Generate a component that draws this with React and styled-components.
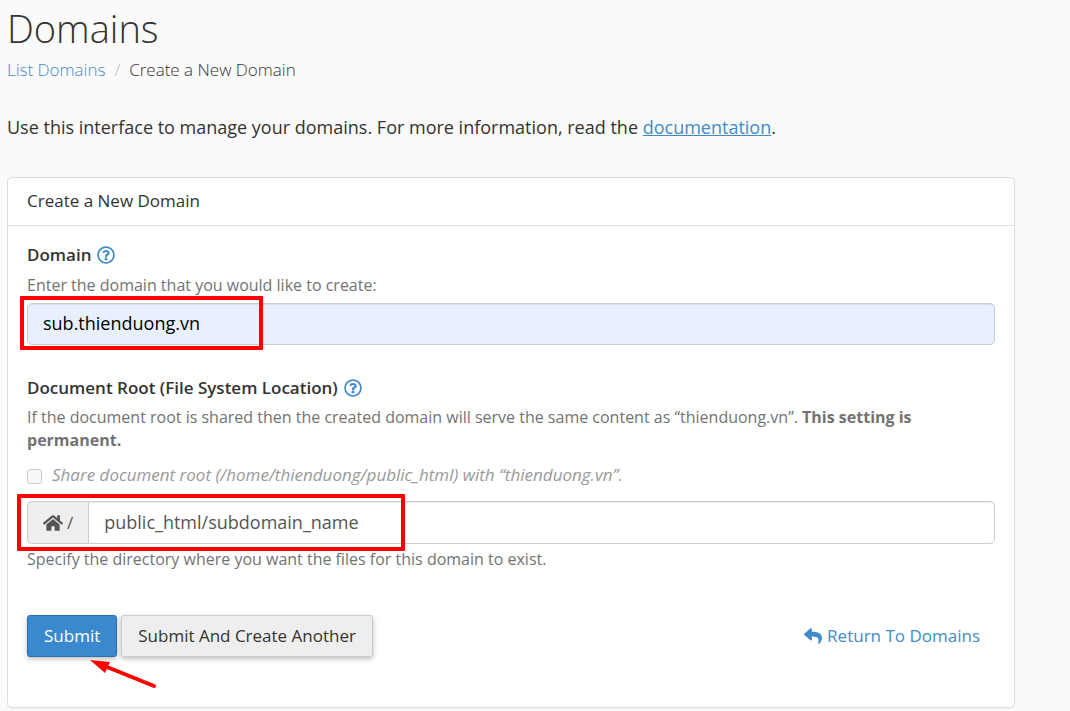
import React from "react";
import styled, { createGlobalStyle } from "styled-components";
import { FaHome, FaReply, FaRegQuestionCircle } from "react-icons/fa";

const GlobalStyle = createGlobalStyle`
  *, *::before, *::after { box-sizing: border-box; }
  html { background: #fafafa; }
  body {
    margin: 0;
    background: #fafafa;
    color: #333;
    font-family: "Open Sans", "Noto Sans", sans-serif;
    font-size: 17px;
    line-height: 26px;
  }
`;

const Page = styled.main`
  padding: 6px 55px 3px 7px;
`;

const Title = styled.h1`
  margin: 0 0 7px;
  font-size: 38px;
  font-weight: 300;
  line-height: 44px;
`;

const Link = styled.a`
  color: #428bca;
  text-decoration: ${(p) => (p.$underlined ? "underline" : "none")};
`;

const Breadcrumb = styled.ol`
  display: flex;
  margin: 0 0 31px;
  padding: 0;
  list-style: none;
  font-weight: 300;
`;

const Crumb = styled.li`
  & + &::before {
    content: "/";
    padding: 0 9px;
    color: #bbb;
  }
`;

const Intro = styled.p`
  margin: 0 0 37px;
  font-size: 18px;
`;

const Panel = styled.section`
  background: #fff;
  border: 1px solid #ddd;
  border-radius: 5px;
  box-shadow: 0 1px 1px rgba(0, 0, 0, 0.05);
`;

const PanelHeader = styled.h2`
  margin: 0;
  padding: 10px 19px 11px;
  border-bottom: 1px solid #ddd;
  font-size: 17px;
  font-weight: 400;
  line-height: 26px;
`;

const PanelBody = styled.form`
  padding: 16px 19px 50px;
`;

const LabelRow = styled.div`
  display: flex;
  align-items: center;
  gap: 6px;
  margin-bottom: ${(p) => p.$gap}px;
`;

const FieldLabel = styled.label`
  font-weight: 600;
`;

const HelpButton = styled.button`
  display: flex;
  padding: 0;
  border: 0;
  background: none;
  color: #428bca;
  font-size: 18px;
  cursor: pointer;
`;

const Hint = styled.p`
  margin: 0;
  color: #737373;
  font-size: 16px;
  line-height: 23px;
`;

const Field = styled.div`
  position: relative;
  display: flex;
  margin: ${(p) => p.$margin};
`;

const TextInput = styled.input`
  flex: 1;
  min-width: 0;
  height: ${(p) => (p.$attached ? 43 : 42)}px;
  padding: 5px 15px 7px;
  border: 1px solid #ccc;
  border-radius: ${(p) => (p.$attached ? "0 5px 5px 0" : "5px")};
  background: ${(p) => (p.$filled ? "#e8f0fe" : "#fff")};
  box-shadow: inset 0 1px 1px rgba(0, 0, 0, 0.075);
  color: ${(p) => (p.$filled ? "#000" : "#555")};
  font: inherit;
  font-size: 18px;
  outline: none;
`;

const Addon = styled.span`
  display: flex;
  align-items: center;
  gap: 4px;
  padding: 0 15px;
  border: 1px solid #ccc;
  border-right: 0;
  border-radius: 5px 0 0 5px;
  background: #eee;
  color: #555;
`;

const HomeIcon = styled(FaHome)`
  width: 20px;
  height: 20px;
`;

const CheckRow = styled.label`
  display: flex;
  align-items: center;
  gap: 10px;
  margin-top: 10px;
  color: #999;
  font-style: italic;
`;

const CheckBox = styled.input`
  appearance: none;
  width: 15px;
  height: 15px;
  margin: 3px 0 0;
  border: 1px solid #ccc;
  border-radius: 3px;
  background: #f8f8f8;
`;

const Actions = styled.div`
  position: relative;
  display: flex;
  align-items: center;
  gap: 4px;
  margin-top: 44px;
`;

const Button = styled.button`
  height: 42px;
  padding: 0 16px;
  border: 1px solid ${(p) => (p.$primary ? "#2a70ab" : "#ccc")};
  border-radius: 3px;
  background: ${(p) => (p.$primary ? "#3a89cf" : "#eee")};
  box-shadow: 0 2px 5px rgba(0, 0, 0, 0.26);
  color: ${(p) => (p.$primary ? "#fff" : "#333")};
  font: inherit;
  white-space: nowrap;
  cursor: pointer;
`;

const ReturnLink = styled(Link)`
  display: flex;
  align-items: center;
  gap: 5px;
  margin-left: auto;
  padding-right: 15px;

  svg {
    width: 18px;
    height: 18px;
  }
`;

const Highlight = styled.div`
  position: absolute;
  top: -7px;
  left: ${(p) => p.$left}px;
  width: ${(p) => p.$width}px;
  height: ${(p) => p.$height}px;
  border: 4px solid #f00;
  border-radius: 1px;
  pointer-events: none;
`;

const Arrow = styled.svg`
  position: absolute;
  top: 44px;
  left: 62px;
  pointer-events: none;
`;

function Help({ topic }) {
  return (
    <HelpButton type="button" aria-label={`Help: ${topic}`}>
      <FaRegQuestionCircle />
    </HelpButton>
  );
}

export default function App() {
  return (
    <>
      <GlobalStyle />
      <Page>
        <Title>Domains</Title>
        <nav>
          <Breadcrumb>
            <Crumb><Link href="#list">List Domains</Link></Crumb>
            <Crumb>Create a New Domain</Crumb>
          </Breadcrumb>
        </nav>
        <Intro>
          Use this interface to manage your domains. For more information, read the{" "}
          <Link href="#docs" $underlined>documentation</Link>.
        </Intro>
        <Panel>
          <PanelHeader>Create a New Domain</PanelHeader>
          <PanelBody onSubmit={(e) => e.preventDefault()}>
            <LabelRow $gap={6}>
              <FieldLabel htmlFor="domain">Domain</FieldLabel>
              <Help topic="Domain" />
            </LabelRow>
            <Hint>Enter the domain that you would like to create:</Hint>
            <Field $margin="6px 0 30px">
              <TextInput id="domain" type="text" defaultValue="sub.thienduong.vn" $filled />
              <Highlight $left={-7} $width={243} $height={54} />
            </Field>

            <LabelRow $gap={5}>
              <FieldLabel htmlFor="root">Document Root (File System Location)</FieldLabel>
              <Help topic="Document Root" />
            </LabelRow>
            <Hint>
              If the document root is shared then the created domain will serve the same
              content as “thienduong.vn”. <strong>This setting is permanent.</strong>
            </Hint>
            <CheckRow>
              <CheckBox type="checkbox" disabled />
              Share document root (/home/thienduong/public_html) with “thienduong.vn”.
            </CheckRow>
            <Field $margin="13px 0 4px">
              <Addon><HomeIcon />/</Addon>
              <TextInput id="root" type="text" defaultValue="public_html/subdomain_name" $attached />
              <Highlight $left={-10} $width={388} $height={57} />
            </Field>
            <Hint>Specify the directory where you want the files for this domain to exist.</Hint>

            <Actions>
              <Button type="submit" $primary>Submit</Button>
              <Button type="button">Submit And Create Another</Button>
              <ReturnLink href="#list"><FaReply />Return To Domains</ReturnLink>
              <Arrow width="68" height="30" viewBox="0 0 68 30" aria-hidden="true">
                <path d="M18 8 L65 27" stroke="#f00" strokeWidth="4" strokeLinecap="round" />
                <path d="M1 1 L21 3 L16 14 Z" fill="#f00" />
              </Arrow>
            </Actions>
          </PanelBody>
        </Panel>
      </Page>
    </>
  );
}
